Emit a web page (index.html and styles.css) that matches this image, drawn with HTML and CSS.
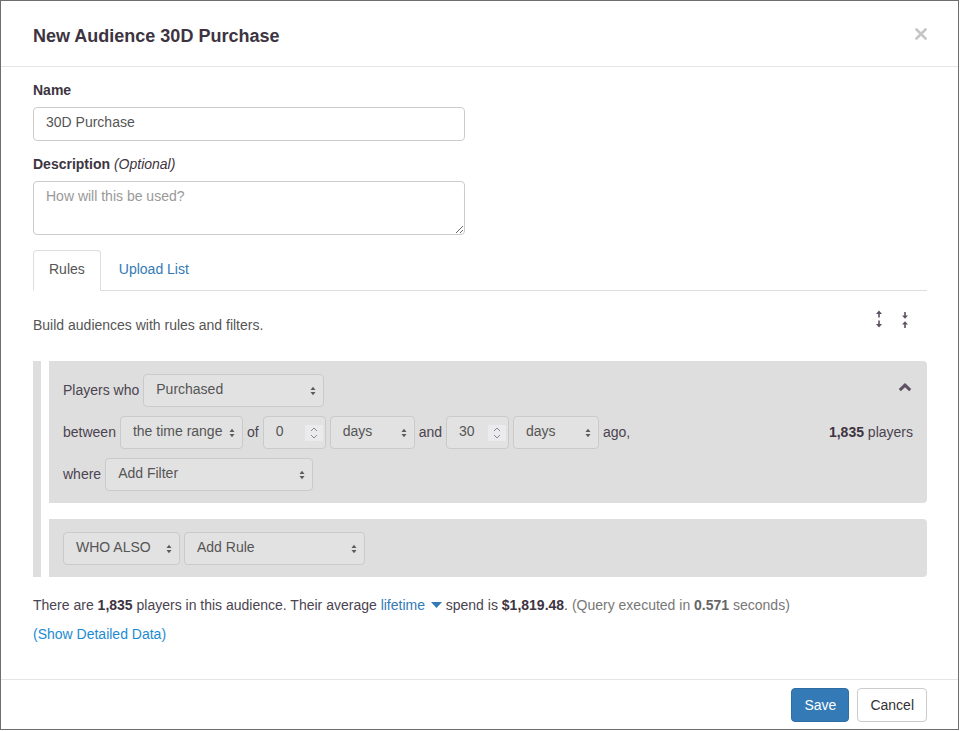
FILE: index.html
```html
<!DOCTYPE html>
<html lang="en">
<head>
<meta charset="utf-8">
<title>New Audience 30D Purchase</title>
<link rel="stylesheet" href="styles.css">
</head>
<body>
<div class="modal">
  <div class="modal-header">
    <h4 class="modal-title">New Audience 30D Purchase</h4>
    <span class="close" aria-label="Close">
      <svg width="12" height="12" viewBox="0 0 12 12"><path d="M1.5 1.5 L10.5 10.5 M10.5 1.5 L1.5 10.5" stroke="#c6c6c6" stroke-width="2.6" stroke-linecap="round"/></svg>
    </span>
  </div>

  <div class="modal-body">
    <div class="form-group">
      <label class="label">Name</label>
      <input class="form-control" type="text" value="30D Purchase">
    </div>
    <div class="form-group last">
      <label class="label">Description <em class="optional">(Optional)</em></label>
      <textarea class="form-control textarea" placeholder="How will this be used?"></textarea>
    </div>

    <ul class="tabs">
      <li class="tab active">Rules</li>
      <li class="tab"><a class="tab-link">Upload List</a></li>
    </ul>

    <div class="help-row">
      <p class="help">Build audiences with rules and filters.</p>
      <div class="tools">
        <svg width="6" height="18" viewBox="0 0 6 18"><path d="M0 4 L3 0.5 L6 4 Z M0 14 L3 17.5 L6 14 Z" fill="#5e5262"/><rect x="2.2" y="3.5" width="1.6" height="4" fill="#5e5262"/><rect x="2.2" y="10.5" width="1.6" height="4" fill="#5e5262"/></svg>
        <svg width="6" height="16" viewBox="0 0 6 16"><path d="M0 3.5 L3 6.8 L6 3.5 Z M0 12.5 L3 9.2 L6 12.5 Z" fill="#5e5262"/><rect x="2.2" y="0" width="1.6" height="4" fill="#5e5262"/><rect x="2.2" y="12" width="1.6" height="4" fill="#5e5262"/></svg>
      </div>
    </div>

    <div class="rules">
      <div class="rules-bar"></div>
      <div class="rule-list">
        <div class="rule-box">
          <div class="rule-row">
            <span class="word">Players who</span>
            <div class="select w-purchased"><span class="select-text">Purchased</span><svg class="arrows" width="6" height="10" viewBox="0 0 6 10"><path d="M0.5 4 L3 0.8 L5.5 4 Z M0.5 6 L3 9.2 L5.5 6 Z" fill="#5a5a5a"/></svg></div>
            <svg class="collapse" width="14" height="9" viewBox="0 0 14 9"><path d="M1.8 7.2 L7 2.2 L12.2 7.2" fill="none" stroke="#5e5262" stroke-width="3"/></svg>
          </div>
          <div class="rule-row">
            <span class="word">between</span>
            <div class="select w-range"><span class="select-text">the time range</span><svg class="arrows" width="6" height="10" viewBox="0 0 6 10"><path d="M0.5 4 L3 0.8 L5.5 4 Z M0.5 6 L3 9.2 L5.5 6 Z" fill="#5a5a5a"/></svg></div>
            <span class="word">of</span>
            <div class="number"><span class="number-text">0</span><span class="spinner"><svg width="10" height="14" viewBox="0 0 10 14"><path d="M2 5 L5 2 L8 5 M2 9 L5 12 L8 9" fill="none" stroke="#8a8a8e" stroke-width="1"/></svg></span></div>
            <div class="select w-days"><span class="select-text">days</span><svg class="arrows" width="6" height="10" viewBox="0 0 6 10"><path d="M0.5 4 L3 0.8 L5.5 4 Z M0.5 6 L3 9.2 L5.5 6 Z" fill="#5a5a5a"/></svg></div>
            <span class="word">and</span>
            <div class="number"><span class="number-text">30</span><span class="spinner"><svg width="10" height="14" viewBox="0 0 10 14"><path d="M2 5 L5 2 L8 5 M2 9 L5 12 L8 9" fill="none" stroke="#8a8a8e" stroke-width="1"/></svg></span></div>
            <div class="select w-days2"><span class="select-text">days</span><svg class="arrows" width="6" height="10" viewBox="0 0 6 10"><path d="M0.5 4 L3 0.8 L5.5 4 Z M0.5 6 L3 9.2 L5.5 6 Z" fill="#5a5a5a"/></svg></div>
            <span class="word">ago,</span>
            <span class="count"><strong class="strong">1,835</strong> players</span>
          </div>
          <div class="rule-row">
            <span class="word">where</span>
            <div class="select w-filter"><span class="select-text">Add Filter</span><svg class="arrows" width="6" height="10" viewBox="0 0 6 10"><path d="M0.5 4 L3 0.8 L5.5 4 Z M0.5 6 L3 9.2 L5.5 6 Z" fill="#5a5a5a"/></svg></div>
          </div>
        </div>
        <div class="rule-box">
          <div class="rule-row">
            <div class="select w-who"><span class="select-text">WHO ALSO</span><svg class="arrows" width="6" height="10" viewBox="0 0 6 10"><path d="M0.5 4 L3 0.8 L5.5 4 Z M0.5 6 L3 9.2 L5.5 6 Z" fill="#5a5a5a"/></svg></div>
            <div class="select w-rule"><span class="select-text">Add Rule</span><svg class="arrows" width="6" height="10" viewBox="0 0 6 10"><path d="M0.5 4 L3 0.8 L5.5 4 Z M0.5 6 L3 9.2 L5.5 6 Z" fill="#5a5a5a"/></svg></div>
          </div>
        </div>
      </div>
    </div>

    <p class="summary">There are <strong class="strong">1,835</strong> players in this audience. Their average <a class="link">lifetime <svg class="caret" width="11" height="6" viewBox="0 0 11 6"><path d="M0 0 H11 L5.5 6 Z" fill="#337ab7"/></svg></a> spend is <strong class="strong">$1,819.48</strong>. <span class="query">(Query executed in <strong class="query-strong">0.571</strong> seconds)</span></p>
    <p class="detail"><a class="detail-link">(Show Detailed Data)</a></p>
  </div>

  <div class="modal-footer">
    <button class="btn btn-primary" type="button">Save</button>
    <button class="btn btn-default" type="button">Cancel</button>
  </div>
</div>
</body>
</html>
```

FILE: styles.css
```css
* { box-sizing: border-box; }

body {
  margin: 0;
  background: #ffffff;
  font-family: "Liberation Sans", Arial, sans-serif;
  font-size: 14px;
  line-height: 20px;
  color: #4b4350;
}

.modal {
  width: 959px;
  height: 730px;
  border: 1px solid #6e6e6e;
  background: #ffffff;
  display: flex;
  flex-direction: column;
}

.modal-header {
  display: flex;
  align-items: center;
  justify-content: space-between;
  padding: 15px 31px 10px 32px;
  border-bottom: 1px solid #e5e5e5;
}

.modal-title {
  margin: 0;
  font-size: 18px;
  line-height: 40px;
  font-weight: bold;
  color: #3d3441;
}

.close {
  display: flex;
  width: 12px;
  height: 12px;
  margin-top: -4px;
}

.modal-body {
  padding: 13px 31px 35px 32px;
  flex: 1;
}

.form-group { margin-bottom: 13px; }
.form-group.last { margin-bottom: 15px; }

.label {
  display: block;
  font-weight: bold;
  color: #3d3441;
  margin-bottom: 7px;
}

.optional {
  font-weight: normal;
  font-style: italic;
}

.form-control {
  display: block;
  width: 432px;
  height: 34px;
  padding: 2px 12px 6px;
  border: 1px solid #cccccc;
  border-radius: 4px;
  font-family: "Liberation Sans", Arial, sans-serif;
  font-size: 14px;
  line-height: 20px;
  color: #555555;
  background: #ffffff;
  outline: none;
}

.textarea {
  height: 54px;
  padding: 4px 12px;
  resize: vertical;
}

.textarea::placeholder { color: #999999; }

.tabs {
  display: flex;
  list-style: none;
  margin: 0;
  padding: 0;
  border-bottom: 1px solid #dddddd;
}

.tab {
  padding: 8px 15px 11px;
  margin-bottom: -1px;
  margin-right: 2px;
  border: 1px solid transparent;
  border-radius: 4px 4px 0 0;
  line-height: 20px;
}

.tab.active {
  border-color: #dddddd #dddddd transparent;
  background: #ffffff;
  color: #555555;
}

.tab-link { color: #337ab7; }

.help-row {
  display: flex;
  justify-content: space-between;
  align-items: flex-start;
  margin-top: 19px;
  margin-bottom: 26px;
}

.help {
  margin: 5px 0 0;
  color: #555555;
}

.tools {
  display: flex;
  align-items: flex-start;
  gap: 20px;
  padding-right: 19px;
}

.tools svg:last-child { margin-top: 2px; }

.rules { display: flex; }

.rules-bar {
  width: 8px;
  margin-right: 8px;
  background: #dedede;
}

.rule-list {
  flex: 1;
  display: flex;
  flex-direction: column;
  gap: 16px;
}

.rule-box {
  background: #dedede;
  border-radius: 0 4px 4px 0;
  padding: 13px 14px 12px;
  display: flex;
  flex-direction: column;
  gap: 9px;
}

.rule-row {
  display: flex;
  align-items: center;
  gap: 4px;
  height: 33px;
}

.word {
  color: #4b4350;
  padding-bottom: 2px;
}

.select {
  display: flex;
  align-items: center;
  height: 33px;
  padding: 0 7px 0 12px;
  border: 1px solid #cacaca;
  border-radius: 4px;
  background: #e2e2e2;
  color: #555555;
}

.select-text {
  flex: 1;
  line-height: 29px;
  padding-bottom: 2px;
  white-space: nowrap;
}

.arrows { flex: none; }

.w-purchased { width: 181px; }
.w-range { width: 123px; }
.w-days { width: 85px; }
.w-days2 { width: 86px; }
.w-filter { width: 208px; }
.w-who { width: 117px; }
.w-rule { width: 181px; }

.number {
  display: flex;
  align-items: center;
  width: 63px;
  height: 33px;
  padding: 0 2px 0 12px;
  border: 1px solid #cacaca;
  border-radius: 4px;
  background: #e2e2e2;
  color: #555555;
}

.number-text {
  flex: 1;
  line-height: 29px;
  padding-bottom: 2px;
}

.spinner {
  display: flex;
  align-items: center;
  justify-content: center;
  width: 18px;
  height: 16px;
  background: #ebebee;
}

.collapse {
  margin-left: auto;
  margin-right: 1px;
  align-self: flex-start;
  margin-top: 9px;
}

.count {
  margin-left: auto;
  padding-bottom: 2px;
  color: #4b4350;
}

.strong {
  font-weight: bold;
  color: #3d3441;
}

.summary {
  margin: 18px 0 0;
  color: #4b4350;
}

.link { color: #337ab7; }

.caret {
  display: inline-block;
  vertical-align: middle;
  margin-left: 2px;
  margin-top: -3px;
}

.query { color: #777777; }
.query-strong { font-weight: bold; color: #666666; }

.detail { margin: 9px 0 0; }
.detail-link { color: #1c8bd3; }

.modal-footer {
  display: flex;
  justify-content: flex-end;
  gap: 8px;
  padding: 8px 31px 7px 32px;
  border-top: 1px solid #e5e5e5;
}

.btn {
  height: 34px;
  padding: 6px 12px;
  border: 1px solid transparent;
  border-radius: 4px;
  font-family: "Liberation Sans", Arial, sans-serif;
  font-size: 14px;
  line-height: 20px;
  cursor: pointer;
}

.btn-primary {
  background: #337ab7;
  border-color: #2e6da4;
  color: #ffffff;
}

.btn-default {
  background: #ffffff;
  border-color: #cccccc;
  color: #333333;
}
```
